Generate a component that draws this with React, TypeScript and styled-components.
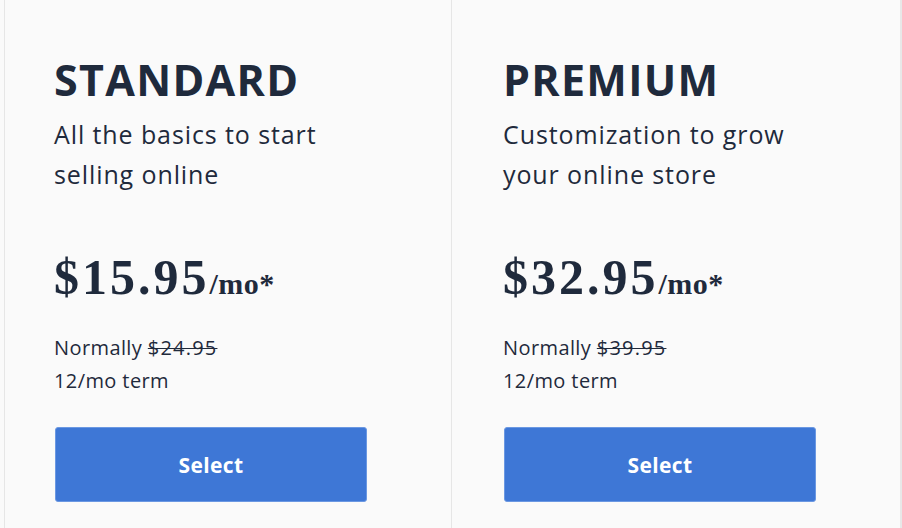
import React from 'react';
import styled, { createGlobalStyle } from 'styled-components';

const GlobalStyle = createGlobalStyle`
  html, body {
    margin: 0;
    padding: 0;
    background: #fafafa;
  }
  body {
    font-family: 'Open Sans', 'Liberation Sans', sans-serif;
    color: #1f2a3c;
  }
`;

const PlansRow = styled.section`
  display: grid;
  grid-template-columns: 447px 449px;
  margin-left: 4px;
  height: 528px;
  overflow: hidden;
  border-right: 2px solid #e8e8e8;
  width: 896px;
`;

const PlanCard = styled.div<{ $inset: number }>`
  border-left: 1px solid #e6e6e6;
  padding: 54px 0 0 ${(p) => p.$inset}px;
  background: #fafafa;
`;

const PlanName = styled.h2`
  margin: 0;
  font-family: 'Open Sans', 'Liberation Sans', sans-serif;
  font-weight: 700;
  font-size: 43px;
  line-height: 52px;
  letter-spacing: 1.3px;
  color: #1f2a3c;
`;

const Tagline = styled.p`
  margin: 8px 0 0;
  font-family: 'Open Sans', 'Liberation Sans', sans-serif;
  font-size: 25px;
  line-height: 40px;
  letter-spacing: 0.9px;
  color: #1f2a3c;
  max-width: 330px;
`;

const Price = styled.div`
  margin-top: 53px;
  font-family: 'Liberation Serif', 'DejaVu Serif', serif;
  font-weight: 700;
  font-size: 50px;
  line-height: 60px;
  letter-spacing: 3px;
  color: #1f2a3c;
`;

const Per = styled.span`
  font-size: 30px;
  letter-spacing: 0.5px;
`;

const Note = styled.div`
  margin-top: 17px;
  font-family: 'Open Sans', 'Liberation Sans', sans-serif;
  font-size: 20px;
  line-height: 33px;
  letter-spacing: 0.4px;
  color: #1f2a3c;
`;

const Struck = styled.s`
  text-decoration-thickness: 1px;
  letter-spacing: 1.2px;
`;

const SelectButton = styled.button`
  display: flex;
  align-items: center;
  justify-content: center;
  margin: 30px 0 0 1px;
  width: 312px;
  height: 75px;
  background: #3e77d6;
  border: 1px solid #6b98e2;
  border-radius: 3px;
  color: #ffffff;
  font-family: 'Open Sans', 'Liberation Sans', sans-serif;
  font-weight: 700;
  font-size: 21px;
  letter-spacing: 0.4px;
  cursor: pointer;
`;

const plans = [
  { name: 'STANDARD', tagline: 'All the basics to start selling online', price: '$15.95', normal: '$24.95', inset: 49 },
  { name: 'PREMIUM', tagline: 'Customization to grow your online store', price: '$32.95', normal: '$39.95', inset: 51 },
];

const App: React.FC = () => (
  <>
    <GlobalStyle />
    <PlansRow>
      {plans.map((plan) => (
        <PlanCard key={plan.name} $inset={plan.inset}>
          <PlanName>{plan.name}</PlanName>
          <Tagline>{plan.tagline}</Tagline>
          <Price>
            {plan.price}
            <Per>/mo*</Per>
          </Price>
          <Note>
            Normally <Struck>{plan.normal}</Struck>
            <br />
            12/mo term
          </Note>
          <SelectButton>Select</SelectButton>
        </PlanCard>
      ))}
    </PlansRow>
  </>
);

export default App;
